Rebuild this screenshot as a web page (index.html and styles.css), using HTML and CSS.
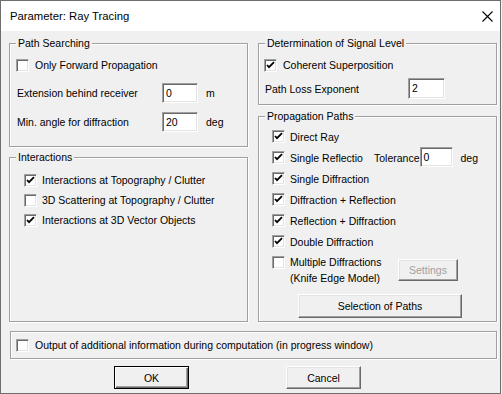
FILE: index.html
```html
<!DOCTYPE html>
<html>
<head>
<meta charset="utf-8">
<link rel="stylesheet" href="styles.css">
</head>
<body>
<div class="window">
  <div class="titlebar">
    <span class="title">Parameter: Ray Tracing</span>
    <svg class="close" width="11" height="11" viewBox="0 0 11 11"><path d="M0.5 0.5 L10.5 10.5 M10.5 0.5 L0.5 10.5" stroke="#000" stroke-width="1.1" fill="none"/></svg>
  </div>
  <div class="client">
    <div class="columns">
      <div class="col">
        <div class="group g-path">
          <span class="legend">Path Searching</span>
          <div class="row r-first"><span class="cb"></span><span>Only Forward Propagation</span></div>
          <div class="row field r-ext"><span class="flabel">Extension behind receiver</span><span class="edit">0</span><span class="unit">m</span></div>
          <div class="row field r-ang"><span class="flabel">Min. angle for diffraction</span><span class="edit">20</span><span class="unit">deg</span></div>
        </div>
        <div class="group g-inter">
          <span class="legend">Interactions</span>
          <div class="row crow"><span class="cb on"><svg viewBox="0 0 11 11"><path d="M2 5 L4 7.2 L9 2.2" /></svg></span><span>Interactions at Topography / Clutter</span></div>
          <div class="row crow"><span class="cb"></span><span>3D Scattering at Topography / Clutter</span></div>
          <div class="row crow"><span class="cb on"><svg viewBox="0 0 11 11"><path d="M2 5 L4 7.2 L9 2.2" /></svg></span><span>Interactions at 3D Vector Objects</span></div>
        </div>
      </div>
      <div class="col">
        <div class="group g-signal">
          <span class="legend">Determination of Signal Level</span>
          <div class="row r-first"><span class="cb on"><svg viewBox="0 0 11 11"><path d="M2 5 L4 7.2 L9 2.2" /></svg></span><span>Coherent Superposition</span></div>
          <div class="row field r-exp"><span class="flabel">Path Loss Exponent</span><span class="edit">2</span></div>
        </div>
        <div class="group g-prop">
          <span class="legend">Propagation Paths</span>
          <div class="row prow"><span class="cb on"><svg viewBox="0 0 11 11"><path d="M2 5 L4 7.2 L9 2.2" /></svg></span><span>Direct Ray</span></div>
          <div class="row prow"><span class="cb on"><svg viewBox="0 0 11 11"><path d="M2 5 L4 7.2 L9 2.2" /></svg></span><span class="clip">Single Reflectio</span><span class="tol">Tolerance</span><span class="edit e-tol">0</span><span class="unit">deg</span></div>
          <div class="row prow"><span class="cb on"><svg viewBox="0 0 11 11"><path d="M2 5 L4 7.2 L9 2.2" /></svg></span><span>Single Diffraction</span></div>
          <div class="row prow"><span class="cb on"><svg viewBox="0 0 11 11"><path d="M2 5 L4 7.2 L9 2.2" /></svg></span><span>Diffraction + Reflection</span></div>
          <div class="row prow"><span class="cb on"><svg viewBox="0 0 11 11"><path d="M2 5 L4 7.2 L9 2.2" /></svg></span><span>Reflection + Diffraction</span></div>
          <div class="row prow"><span class="cb on"><svg viewBox="0 0 11 11"><path d="M2 5 L4 7.2 L9 2.2" /></svg></span><span>Double Diffraction</span></div>
          <div class="row multi"><span class="cb"></span><span class="two">Multiple Diffractions<br>(Knife Edge Model)</span><span class="btn disabled b-settings">Settings</span></div>
          <div class="row sel"><span class="btn b-sel">Selection of Paths</span></div>
        </div>
      </div>
    </div>
    <div class="group outbox">
      <div class="row"><span class="cb"></span><span>Output of additional information during computation (in progress window)</span></div>
    </div>
    <div class="buttons">
      <span class="btn default b-ok">OK</span>
      <span class="btn b-cancel">Cancel</span>
    </div>
  </div>
</div>
</body>
</html>
```
FILE: styles.css
```css
html, body { margin: 0; padding: 0; background: #f0f0f0; }
body { font-family: "Liberation Sans", Arial, sans-serif; font-size: 10.5px; color: #000; }
.window { width: 501px; height: 394px; box-sizing: border-box; border: 1px solid #6e6e6e; background: #f0f0f0; display: flex; flex-direction: column; }
.titlebar { height: 30px; flex: none; background: #fff; display: flex; align-items: center; justify-content: space-between; padding: 0 7px 0 9px; }
.title { font-family: "Liberation Sans", sans-serif; font-size: 11.3px; }
.close { margin-top: 1px; }
.client { flex: 1; padding: 12px 0 0 8px; }
.columns { display: flex; gap: 10px; }
.col { width: 239px; display: flex; flex-direction: column; }
.group { position: relative; box-sizing: border-box; border: 1px solid #a0a0a0; box-shadow: inset 1px 1px 0 #fff, 1px 1px 0 #fff; }
.legend { position: absolute; top: -8px; left: 6px; padding: 0 2px; background: #f0f0f0; line-height: 14px; white-space: nowrap; }
.row { display: flex; align-items: center; white-space: nowrap; }
.cb { width: 13px; height: 13px; box-sizing: border-box; flex: none; background: #fff; border: 1px solid; border-color: #a0a0a0 #fff #fff #a0a0a0; box-shadow: inset 1px 1px 0 #696969, inset -1px -1px 0 #e3e3e3; margin-right: 6px; display: flex; align-items: center; justify-content: center; }
.cb svg { width: 11px; height: 11px; }
.cb svg path { fill: none; stroke: #000; stroke-width: 1.8; }
.edit { box-sizing: border-box; width: 36px; height: 20px; background: #fff; border: 1px solid; border-color: #a0a0a0 #fff #fff #a0a0a0; box-shadow: inset 1px 1px 0 #696969, inset -1px -1px 0 #e3e3e3; padding: 2px 0 0 3px; line-height: 14px; flex: none; }
.unit { margin-left: 8px; }

.g-path { height: 104px; padding: 11px 0 0 7px; }
.g-path .r-first { height: 20px; margin-left: -1px; }
.g-path .field { height: 20px; }
.g-path .r-ext { margin-top: 8px; }
.g-path .r-ang { margin-top: 9px; }
.g-path .flabel { width: 145px; }

.g-inter { height: 165px; margin-top: 10px; padding: 12px 0 0 14px; }
.crow { height: 20px; }
.crow .cb { margin-right: 5px; }

.g-signal { height: 62px; padding: 11px 0 0 5px; }
.g-signal .r-first { height: 20px; }
.g-signal .r-exp { margin-top: 3px; height: 21px; padding-left: 1px; }
.g-signal .flabel { width: 143px; }
.g-signal .edit { width: 37px; height: 21px; }

.g-prop { height: 206px; margin-top: 11px; padding: 9px 0 0 13px; }
.prow { height: 21px; }
.prow .cb, .multi .cb { margin-right: 5px; }
.clip { width: 79px; }
.tol { margin-left: 5px; }
.e-tol { width: 33px; height: 20px; margin-top: -2px; }
.multi { align-items: flex-start; margin-top: 4px; height: 32px; }
.two { line-height: 16px; margin-top: -2px; width: 108px; }
.multi .b-settings { margin-top: 3px; }
.sel { margin-top: 6px; padding-left: 26px; }

.btn { box-sizing: border-box; display: inline-flex; align-items: center; justify-content: center; background: #f0f0f0; border: 1px solid; border-color: #fff #696969 #696969 #fff; box-shadow: inset -1px -1px 0 #a0a0a0, inset 1px 1px 0 #e3e3e3; height: 23px; }
.btn.disabled { color: #a0a0a0; }
.b-settings { width: 60px; height: 22px; }
.b-sel { width: 164px; height: 24px; }
.btn.default { border-color: #000; box-shadow: inset 1px 1px 0 #fff, inset -1px -1px 0 #696969, inset -2px -2px 0 #a0a0a0; }

.outbox { width: 487px; height: 28px; margin: 9px 0 0 1px; padding: 0 0 0 5px; display: flex; align-items: center; }
.buttons { display: flex; margin-top: 7px; padding-left: 105px; gap: 97px; }
.b-ok, .b-cancel { width: 75px; height: 23px; }
```
